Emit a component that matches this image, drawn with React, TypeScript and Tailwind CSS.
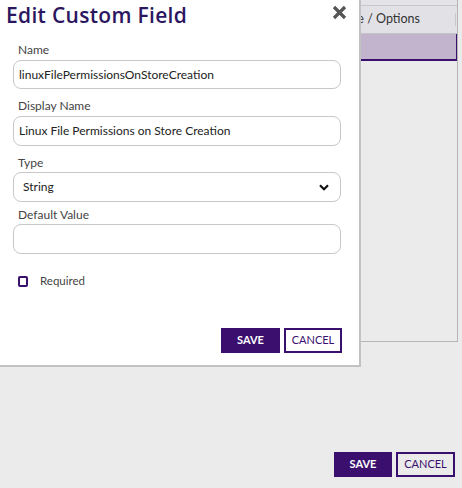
import React from "react";

const font = { fontFamily: 'Lato, "Liberation Sans", Arial, sans-serif' };
const titleFont = { fontFamily: '"Open Sans", Lato, Arial, sans-serif' };

export default function App() {
  return (
    <div className="relative w-[462px] h-[488px] bg-[#ebebeb] overflow-hidden" style={font}>
      {/* background page */}
      <div className="flex flex-col h-full">
        <div className="ml-[200px] mr-[4px] h-[342px] border-r border-b border-[#b5b5b5] flex flex-col">
          <div className="h-[6px] bg-[#e4e4e8] border-b border-[#c8c8cc]" />
          <div className="h-[28px] bg-[#e2e2e6] border-b border-[#c4c4c8] flex items-center justify-end pr-[1px]">
            <span className="text-[12.5px] text-[#333] mr-[35px]">Type / Options</span>
            <div className="w-px h-[13px] bg-[#c8c8cc]" />
          </div>
          <div className="h-[27px] bg-[#c2b4cc] border-b-2 border-r border-[#3b0f6e]" />
          <div className="flex-1" />
        </div>
        <div className="flex justify-end gap-[4px] pr-[7px] mt-[110px]">
          <button className="w-[58px] h-[25px] bg-[#3b0f6e] text-white text-[11px] font-bold">SAVE</button>
          <button className="w-[59px] h-[25px] border-2 border-[#3b0f6e] text-[#3b0f6e] text-[11px]">CANCEL</button>
        </div>
      </div>

      {/* dialog */}
      <div className="absolute left-0 top-0 w-[361px] h-[367px] bg-white border-r-2 border-b-2 border-[#c2c2c2] flex flex-col">
        <div className="flex items-start justify-between pl-[6px] pr-[12px] pt-[3px] h-[27px]">
          <h2 className="text-[21px] font-semibold leading-[24px] tracking-[0.3px] text-[#2b1660]" style={titleFont}>
            Edit Custom Field
          </h2>
          <svg width="15" height="15" viewBox="0 0 15 15" className="mt-[2px]">
            <path d="M2 2 L13 13 M13 2 L2 13" stroke="#555" strokeWidth="3.2" strokeLinecap="butt" />
          </svg>
        </div>
        <div className="flex flex-col pl-[13px] pr-[18px] mt-[16px]">
          <label className="text-[12px] leading-[14px] text-[#444] pl-[5px] mb-[3px]">Name</label>
          <div className="h-[29px] border border-[#c8c8c8] rounded-[8px] flex items-center px-[5px] text-[12px] text-[#222]">
            linuxFilePermissionsOnStoreCreation
          </div>
          <label className="text-[12px] leading-[14px] text-[#444] pl-[5px] mt-[10px] mb-[3px]">Display Name</label>
          <div className="h-[30px] border border-[#c8c8c8] rounded-[8px] flex items-center px-[5px] text-[12px] text-[#222]">
            Linux File Permissions on Store Creation
          </div>
          <label className="text-[12px] leading-[14px] text-[#444] pl-[5px] mt-[10px] mb-[2px]">Type</label>
          <div className="h-[30px] border border-[#c8c8c8] rounded-[8px] flex items-center justify-between pl-[9px] pr-[11px] text-[12px] text-[#222]">
            <span>String</span>
            <svg width="10" height="7" viewBox="0 0 10 7">
              <path d="M1 1.2 L5 5.2 L9 1.2" fill="none" stroke="#111" strokeWidth="2.2" />
            </svg>
          </div>
          <label className="text-[12px] leading-[14px] text-[#444] pl-[5px] mt-[6px] mb-[2px]">Default Value</label>
          <div className="h-[30px] border border-[#c8c8c8] rounded-[8px]" />
          <div className="flex items-center mt-[20px] pl-[5px] h-[14px]">
            <div className="w-[10px] h-[11px] border-2 border-[#3b0f6e] rounded-[2px]" />
            <span className="ml-[12px] text-[11.5px] leading-[14px] text-[#444]">Required</span>
          </div>
        </div>
        <div className="flex justify-end gap-[4px] pr-[17px] mt-auto mb-[12px]">
          <button className="w-[59px] h-[25px] bg-[#3b0f6e] text-white text-[11px] font-bold">SAVE</button>
          <button className="w-[58px] h-[25px] border-2 border-[#3b0f6e] bg-white text-[#3b0f6e] text-[11px]">CANCEL</button>
        </div>
      </div>
    </div>
  );
}
